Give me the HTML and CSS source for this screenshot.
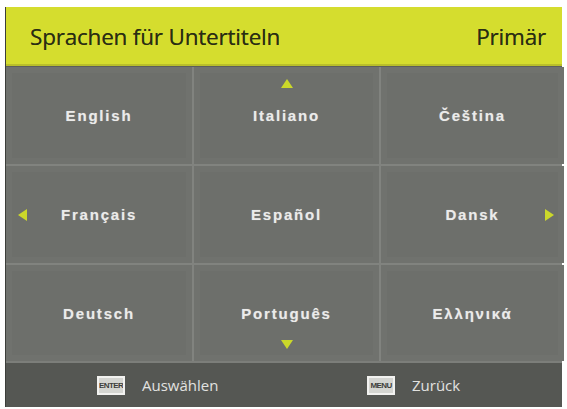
FILE: index.html
```html
<!DOCTYPE html>
<html>
<head>
<meta charset="utf-8">
<link rel="stylesheet" href="styles.css">
</head>
<body>
<div class="panel">
  <div class="header">
    <span class="title">Sprachen für Untertiteln</span>
    <span class="mode">Primär</span>
  </div>
  <div class="grid">
    <div class="cell"><span class="lang">English</span></div>
    <div class="cell"><span class="arrow up"></span><span class="lang">Italiano</span></div>
    <div class="cell"><span class="lang">Čeština</span></div>
    <div class="cell"><span class="arrow left"></span><span class="lang">Français</span></div>
    <div class="cell"><span class="lang">Español</span></div>
    <div class="cell"><span class="lang">Dansk</span><span class="arrow right"></span></div>
    <div class="cell"><span class="lang">Deutsch</span></div>
    <div class="cell"><span class="lang">Português</span><span class="arrow down"></span></div>
    <div class="cell"><span class="lang">Ελληνικά</span></div>
  </div>
  <div class="footer">
    <div class="hint"><span class="key">ENTER</span><span class="label">Auswählen</span></div>
    <div class="hint"><span class="key">MENU</span><span class="label">Zurück</span></div>
  </div>
</div>
</body>
</html>
```
FILE: styles.css
```css
html, body {
  margin: 0;
  padding: 0;
  background: #ffffff;
}
body {
  padding: 7px 6px 5px 5px;
}
.panel {
  width: 556px;
  display: flex;
  flex-direction: column;
  background: #6c6e6a;
  border-left: 1px solid #3c3e3a;
}
.header {
  height: 59px;
  background: #d5dd2e;
  display: flex;
  align-items: center;
  justify-content: space-between;
  padding: 0 16px 0 24px;
  font-family: "Open Sans", "Noto Sans", sans-serif;
  font-size: 22.5px;
  color: #2a2d13;
  box-shadow: inset 0 -2px 0 #b9bf2a;
  text-shadow: 0 0 0.6px rgba(40,45,20,0.7);
}
.title {
  letter-spacing: -0.2px;
}
.mode {
  letter-spacing: -0.2px;
}
.grid {
  display: grid;
  grid-template-columns: 186px 185px 183px;
  grid-template-rows: 97px 97px 96px;
  gap: 2px;
  background: #81837f;
  border-top: 1px solid #5c5e5a;
}
.cell {
  position: relative;
  display: flex;
  align-items: center;
  justify-content: center;
  background: #6d6f6b;
  box-shadow: inset 0 0 0 6px #70726e;
}
.lang {
  font-family: "Liberation Sans", Arial, sans-serif;
  font-weight: bold;
  font-size: 15px;
  letter-spacing: 1.8px;
  color: #ebebea;
  text-shadow: 0 0 1px rgba(255,255,255,0.4);
}
.arrow {
  position: absolute;
  width: 0;
  height: 0;
}
.arrow.up {
  top: 12px;
  left: 50%;
  margin-left: -6px;
  border-left: 6px solid transparent;
  border-right: 6px solid transparent;
  border-bottom: 9px solid #cbd82a;
}
.arrow.down {
  bottom: 12px;
  left: 50%;
  margin-left: -6px;
  border-left: 6px solid transparent;
  border-right: 6px solid transparent;
  border-top: 9px solid #cbd82a;
}
.arrow.left {
  left: 12px;
  top: 50%;
  margin-top: -6px;
  border-top: 6px solid transparent;
  border-bottom: 6px solid transparent;
  border-right: 9px solid #cbd82a;
}
.arrow.right {
  right: 10px;
  top: 50%;
  margin-top: -6px;
  border-top: 6px solid transparent;
  border-bottom: 6px solid transparent;
  border-left: 9px solid #cbd82a;
}
.footer {
  height: 44px;
  background: #555753;
  border-top: 2px solid #7c7e7a;
  display: grid;
  grid-template-columns: 1fr 1fr;
  align-items: center;
}
.hint {
  display: flex;
  align-items: center;
  justify-content: flex-start;
  gap: 17px;
}
.hint:first-child {
  padding-left: 91px;
}
.hint:last-child {
  padding-left: 83px;
}
.key {
  display: inline-block;
  width: 24px;
  text-align: center;
  overflow: hidden;
  white-space: nowrap;
  font-family: "Liberation Sans", Arial, sans-serif;
  font-size: 8px;
  font-weight: bold;
  color: #3e3f3c;
  background: #d4d5d1;
  border: 2px solid #f2f2f0;
  padding: 3px 0;
  letter-spacing: -0.6px;
  line-height: 9px;
}
.label {
  font-family: "Open Sans", "Noto Sans", sans-serif;
  font-size: 15px;
  color: #e2e2e0;
}
```
